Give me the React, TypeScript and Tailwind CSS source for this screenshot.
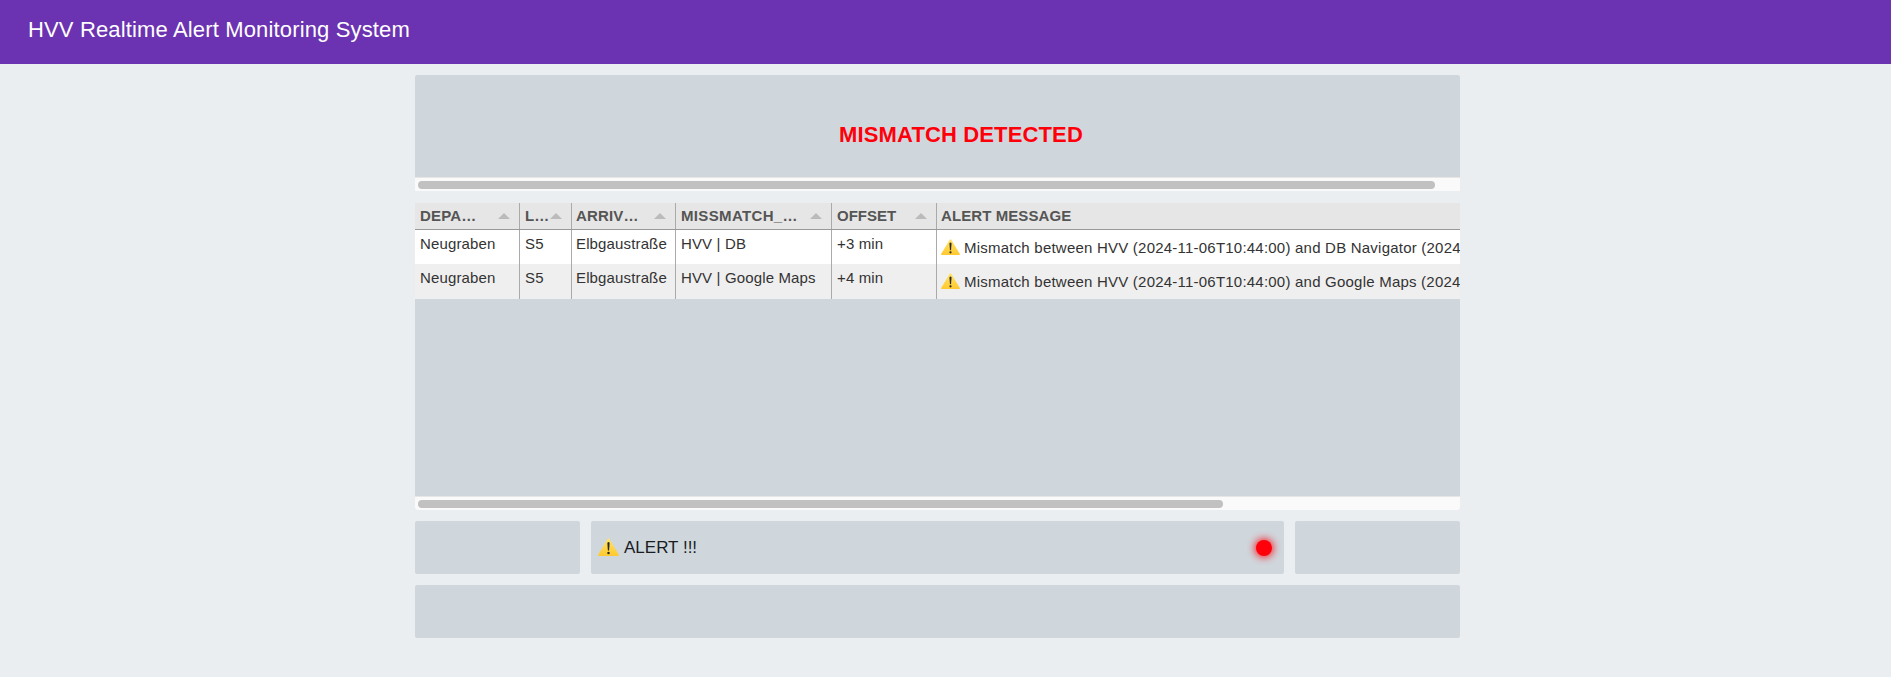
import type { ReactNode } from "react";

function WarningIcon({ className }: { className: string }) {
  return (
    <svg viewBox="0 0 20 17" preserveAspectRatio="none" className={className} aria-hidden="true">
      <defs>
        <linearGradient id="warn" x1="0" y1="0" x2="0" y2="1">
          <stop offset="0" stopColor="#ffe468" />
          <stop offset="1" stopColor="#ffc930" />
        </linearGradient>
      </defs>
      <path d="M9.2 .9Q10 -.3 10.8 .9L19.7 15.7Q20.2 17 19 17H1Q-.2 17 .3 15.7Z" fill="url(#warn)" />
      <path d="M8.9 4.4Q10 3.3 11.1 4.4L10.6 11.6Q10 12.3 9.4 11.6Z" fill="#2b2a20" />
      <circle cx="10" cy="14.1" r="1.2" fill="#2b2a20" />
    </svg>
  );
}

function ScrollTrack({ children }: { children: ReactNode }) {
  return (
    <div className="h-[14px] border-t border-[#e6e6e6] bg-[#fafafa] pl-[3px] pt-[3px]">{children}</div>
  );
}

const columns = [
  { title: "DEPA…", width: "w-[105px] pl-[5px]", tracking: "tracking-[0.2px]", sortable: true },
  { title: "L…", width: "w-[52px] pl-[5px]", tracking: "tracking-normal", sortable: true },
  { title: "ARRIV…", width: "w-[104px] pl-1", tracking: "tracking-[0.15px]", sortable: true },
  { title: "MISSMATCH_…", width: "w-[156px] pl-[5px]", tracking: "tracking-[0.35px]", sortable: true },
  { title: "OFFSET", width: "w-[105px] pl-[5px]", tracking: "tracking-normal", sortable: true },
  { title: "ALERT MESSAGE", width: "w-[523px] border-r-0! pl-1", tracking: "tracking-[0.08px]", sortable: false },
];

const rows = [
  {
    cells: ["Neugraben", "S5", "Elbgaustraße", "HVV | DB", "+3 min"],
    message: "Mismatch between HVV (2024-11-06T10:44:00) and DB Navigator (2024",
    style: "h-[34px] bg-white",
  },
  {
    cells: ["Neugraben", "S5", "Elbgaustraße", "HVV | Google Maps", "+4 min"],
    message: "Mismatch between HVV (2024-11-06T10:44:00) and Google Maps (2024",
    style: "h-[35px] bg-[#efefef]",
  },
];

export default function App() {
  return (
    <div className="h-[677px] overflow-hidden bg-[#eaeef1] font-['Liberation_Sans',Arial,sans-serif]">
      <header className="h-16 bg-[#6b33b1] pl-[28px] pt-[15px] text-[22px] leading-[30px] tracking-[0.15px] text-white">
        <span className="whitespace-nowrap">HVV Realtime Alert Monitoring System</span>
      </header>
      <main className="ml-[415px] flex w-[1045px] flex-col pt-[11px]">
        <section className="overflow-hidden rounded-t-[2px] bg-[#cfd7dd]">
          <h1 className="h-[102px] pl-[424px] pt-[44px] text-[22px] font-bold leading-[32px] tracking-[0.14px] text-[#ff000b]">
            <span className="whitespace-nowrap">MISMATCH DETECTED</span>
          </h1>
          <ScrollTrack>
            <div className="h-2 w-[1017px] rounded-full bg-[#c1c1c1]" />
          </ScrollTrack>
        </section>

        <section className="mt-3 overflow-hidden rounded-b-[2px] bg-[#cfd7dd] text-[15px] text-[#333]">
          <div className="h-[293px]">
            <div className="flex h-[27px] border-b border-[#999] bg-[#e6e6e6] font-bold text-[#555]">
              {columns.map((c) => (
                <div
                  key={c.title}
                  className={`flex shrink-0 items-center justify-between border-r border-[#aaa] pr-[9px] ${c.width}`}
                >
                  <span className={`whitespace-nowrap leading-[26px] ${c.tracking}`}>{c.title}</span>
                  {c.sortable && (
                    <svg viewBox="0 0 12 6" className="-ml-4 h-[6px] w-3 shrink-0" aria-hidden="true">
                      <path d="M0 6L6 0L12 6Z" fill="#bbb" />
                    </svg>
                  )}
                </div>
              ))}
            </div>
            {rows.map((r) => (
              <div key={r.message} className={`flex ${r.style}`}>
                {r.cells.map((cell, i) => (
                  <div
                    key={i}
                    className={`shrink-0 whitespace-nowrap border-r border-[#aaa] pt-1 leading-5 tracking-[0.14px] ${columns[i].width}`}
                  >
                    {cell}
                  </div>
                ))}
                <div className="flex w-[523px] shrink-0 whitespace-nowrap pl-1 pt-2 leading-5 tracking-[0.22px]">
                  <WarningIcon className="mr-[4px] mt-px h-4 w-[19px] shrink-0" />
                  {r.message}
                </div>
              </div>
            ))}
          </div>
          <ScrollTrack>
            <div className="h-2 w-[805px] rounded-full bg-[#c1c1c1]" />
          </ScrollTrack>
        </section>

        <div className="mt-[11px] flex gap-[11px]">
          <div className="h-[53px] w-[165px] rounded-[2px] bg-[#cfd7dd]" />
          <div className="flex h-[53px] w-[693px] items-center rounded-[2px] bg-[#cfd7dd] pl-[7px] pr-3 text-[17px] text-[#1a1c1e]">
            <WarningIcon className="mb-px mr-[5px] h-[18px] w-[21px]" />
            <span className="pt-px">ALERT !!!</span>
            <span className="ml-auto size-4 rounded-full bg-[#ff000b] shadow-[0_0_8px_1px_#ff000b]" />
          </div>
          <div className="h-[53px] w-[165px] rounded-[2px] bg-[#cfd7dd]" />
        </div>
        <div className="mt-[11px] h-[53px] rounded-[2px] bg-[#cfd7dd]" />
      </main>
    </div>
  );
}
